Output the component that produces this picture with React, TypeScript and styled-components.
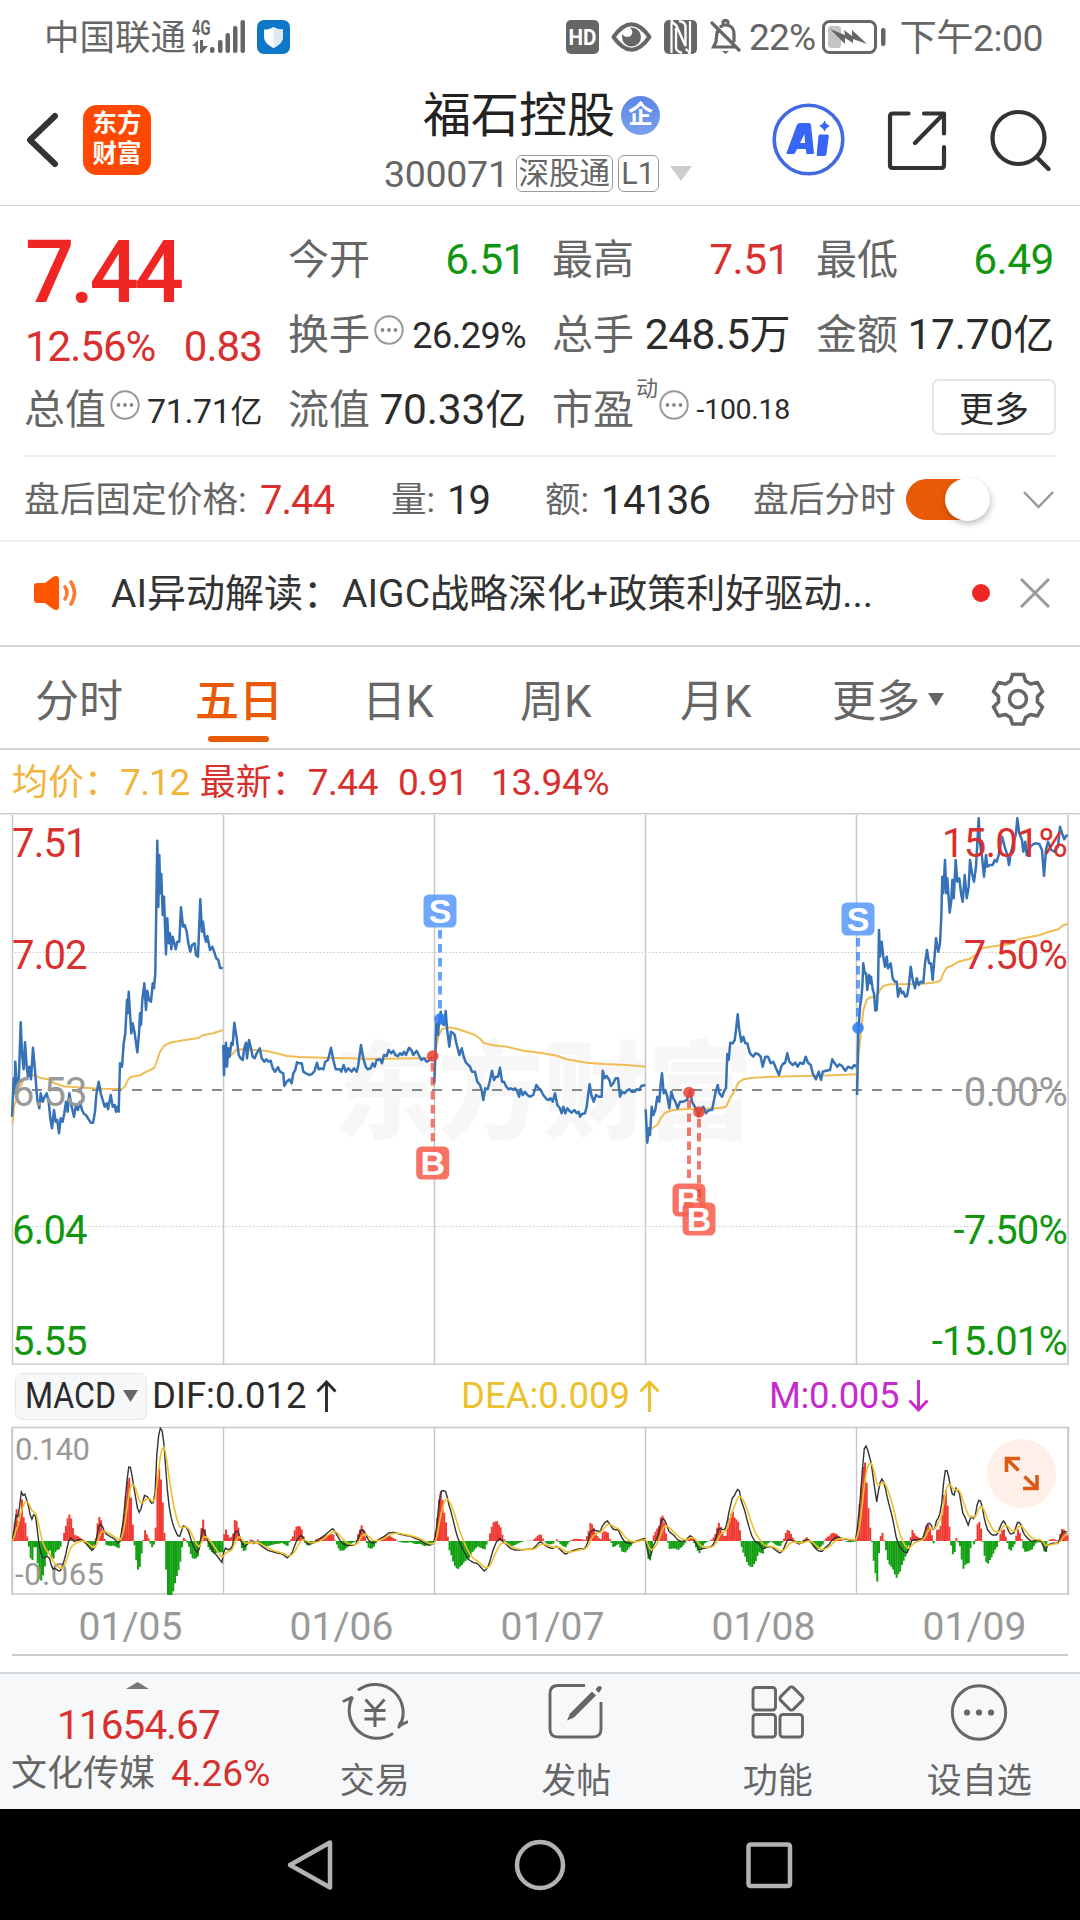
import React from 'react';
import styled, { createGlobalStyle } from 'styled-components';

const RED = '#d8302f';
const GREEN = '#12960f';
const GREY = '#666';
const INK = '#2b2b2b';
const ORANGE = '#e85a05';
const LINE = '#d4d4d4';

const Global = createGlobalStyle`
  * { box-sizing: border-box; }
  body { margin: 0; background: #fff; }
  svg { display: block; flex: none; }
`;

const Screen = styled.div`
  width: 1080px;
  height: 1920px;
  overflow: hidden;
  display: flex;
  flex-direction: column;
  background: #fff;
  font-family: Roboto, 'Noto Sans CJK SC', sans-serif;
  line-height: 1;
`;

const T = styled.span<{ s: number; c?: string; w?: number; ls?: number; ml?: number }>`
  font-size: ${p => p.s}px;
  line-height: 1.1;
  color: ${p => p.c || GREY};
  font-weight: ${p => p.w || 400};
  letter-spacing: ${p => p.ls || 0}px;
  margin-left: ${p => p.ml || 0}px;
  white-space: pre;
  flex: none;
`;

/* ---------- status bar ---------- */
const StatusBar = styled.div`
  height: 74px;
  display: flex;
  justify-content: space-between;
  align-items: center;
  padding: 0 37px 0 44px;
`;
const StatusSide = styled.div`
  display: flex;
  align-items: center;
`;
const StatusIcon = styled.svg<{ ml: number }>`
  margin-left: ${p => p.ml}px;
`;
const StatusText = styled(T)`
  padding-top: 3px;
`;

const Status = () => (
  <StatusBar>
    <StatusSide>
      <StatusText s={35.5}>中国联通</StatusText>
      <StatusIcon ml={6} width="54" height="36" viewBox="0 0 54 36" fill={GREY}>
        <text x="0" y="15.500" fontSize="20" fontWeight="700" textLength="18.500" lengthAdjust="spacingAndGlyphs">4G</text>
        <path d="M0 27l6-6v13H3.500V27zM8 21h3v6h5l-6 7H8z" />
        <rect x="18" y="28" width="4.500" height="6" rx="2" />
        <rect x="26" y="21" width="4.500" height="13" rx="2" />
        <rect x="33.500" y="14" width="4.500" height="20" rx="2" />
        <rect x="41" y="7" width="4.500" height="27" rx="2" />
        <rect x="48.500" y="1" width="4.500" height="33" rx="2" />
      </StatusIcon>
      <StatusIcon ml={11} width="33" height="34" viewBox="0 0 33 34">
        <rect width="33" height="34" rx="7" fill="#0d78c8" />
        <path d="M16.500 7c3 2 6 2.500 9.500 2.500v7c0 5-4 9-9.500 11.500C11 25.500 7 21.500 7 16.500v-7C10.500 9.500 13.500 9 16.500 7z" fill="#fff" />
        <path d="M16.500 7c3 2 6 2.500 9.500 2.500v7c0 5-4 9-9.500 11.500z" fill="#dceaf6" />
      </StatusIcon>
    </StatusSide>
    <StatusSide>
      <StatusIcon ml={0} width="33" height="34" viewBox="0 0 33 34">
        <rect width="33" height="34" rx="5" fill={GREY} />
        <text x="16.500" y="25" fontSize="22" fontWeight="700" fill="#fff" textAnchor="middle" textLength="28" lengthAdjust="spacingAndGlyphs">HD</text>
      </StatusIcon>
      <StatusIcon ml={12} width="41" height="30" viewBox="0 0 41 30">
        <path d="M2.500 15Q20.500-10.500 38.500 15Q20.500 40.500 2.500 15z" fill="none" stroke={GREY} strokeWidth="4" strokeLinejoin="round" />
        <path d="M20.500 5.500a9.500 9.500 0 1 1-9.500 9.500c0-1 .2-2 .5-3 1.500 3.500 7 4 9 1 1.800-3 .5-6-2-7.200z" fill={GREY} />
      </StatusIcon>
      <StatusIcon ml={12} width="33" height="34" viewBox="0 0 33 34">
        <rect width="33" height="34" rx="5" fill={GREY} />
        <path d="M7.500 0Q8 3 12 5L21.500 26V6Q21 2 15 1M12 8V28Q12 31 18 33M26 34Q25 31 21.500 29" fill="none" stroke="#fff" strokeWidth="2.400" />
        <path d="M7.500 2V33M26 1V32" stroke="#fff" strokeWidth="2.200" />
      </StatusIcon>
      <StatusIcon ml={13} width="31" height="36" viewBox="0 0 31 36" fill="none" stroke={GREY} strokeWidth="3.200" strokeLinecap="round">
        <path d="M8.500 10.500C6 14 6.500 20 6 23L3.500 28H25M24 22V15c0-5-3-9-8.500-9-2 0-3.500.5-4.500 1.500M13 4a2.500 2.500 0 0 1 5 0M2 4l27 27" />
        <path d="M12 32h7l-3.500 3z" fill={GREY} stroke="none" />
      </StatusIcon>
      <StatusText s={37} ls={-0.7} ml={8}>22%</StatusText>
      <StatusIcon ml={7} width="65" height="34" viewBox="0 0 65 34">
        <rect x="1.500" y="1.500" width="52" height="31" rx="6" fill="none" stroke={GREY} strokeWidth="3" />
        <rect x="6" y="6" width="13" height="22" rx="3" fill="#c4c4c4" />
        <path d="M8 9l15 6-1-5 8 6v-6l15 14-14-5 0 4-8-5v6z" fill={GREY} />
        <rect x="59" y="8" width="4.500" height="18" rx="2" fill={GREY} />
      </StatusIcon>
      <StatusText s={37.3} ls={-0.5} ml={12}>下午2:00</StatusText>
    </StatusSide>
  </StatusBar>
);

/* ---------- title bar ---------- */
const HeaderBar = styled.header`
  height: 132px;
  display: grid;
  grid-template-columns: 83px 302px 322px 1fr;
  align-items: center;
  border-bottom: 1.500px solid ${LINE};
`;
const Logo = styled.div`
  width: 68px;
  height: 70px;
  border-radius: 14px;
  background: #ff4800;
  color: #fff;
  font-size: 24.500px;
  font-weight: 700;
  line-height: 30px;
  text-align: center;
  padding-top: 4px;
`;
const TitleCol = styled.div`
  display: flex;
  flex-direction: column;
  align-self: start;
  padding-top: 17px;
`;
const NameRow = styled.div`
  display: flex;
  align-items: center;
  height: 50px;
  padding-left: 38px;
`;
const CodeRow = styled.div`
  display: flex;
  align-items: center;
  height: 36px;
  margin-top: 14px;
`;
const CodeText = styled(T)`
  padding-top: 3px;
`;
const Qi = styled.span`
  width: 39px;
  height: 39px;
  border-radius: 50%;
  background: linear-gradient(#5b86e6, #7ba0ec);
  color: #fff;
  font-size: 25px;
  font-weight: 700;
  line-height: 38px;
  text-align: center;
  margin: -2px 0 0 6px;
`;
const Tag = styled.span<{ w: number; ml: number }>`
  width: ${p => p.w}px;
  height: 37px;
  margin-left: ${p => p.ml}px;
  border: 1.500px solid #999;
  border-radius: 6px;
  color: ${GREY};
  font-size: 30.500px;
  line-height: 36px;
  text-align: center;
  white-space: nowrap;
`;
const Actions = styled.div`
  display: flex;
  align-items: center;
  padding-left: 65px;
`;
const ActionIcon = styled.svg<{ ml: number }>`
  margin-left: ${p => p.ml}px;
`;

const Header = () => (
  <HeaderBar>
    <svg width="60" height="60" viewBox="0 0 60 60" fill="none" stroke="#333" strokeWidth="6" strokeLinecap="round" strokeLinejoin="round">
      <path d="M55 6L30 30l25 24" />
    </svg>
    <Logo>东方<br />财富</Logo>
    <TitleCol>
      <NameRow>
        <T s={48} c="#222">福石控股</T>
        <Qi>企</Qi>
      </NameRow>
      <CodeRow>
        <CodeText s={37.5} ls={-0.3} ml={-1}>300071</CodeText>
        <Tag w={97} ml={7}>深股通</Tag>
        <Tag w={41} ml={5}>L1</Tag>
        <ActionIcon ml={11} width="22" height="15"><path d="M0 0h22L11 15z" fill="#ccc" /></ActionIcon>
      </CodeRow>
    </TitleCol>
    <Actions>
      <ActionIcon ml={0} width="73" height="73" viewBox="0 0 73 73">
        <circle cx="36.500" cy="36.500" r="34.300" fill="none" stroke="#4169e1" strokeWidth="3.600" />
        <path d="M14.500 50L25 21.500Q26 20 28 20h9q1.500 0 2 2L42 50q0 1-1 1H34.500L33.700 46H25L23 50q-.5 1-2 1H15q-1 0-.5-1zM28 40h5L32.500 31z" fill="#3865f5" fillRule="evenodd" />
        <path d="M48 31.500h7.500q1.500 0 1.300 1.500L54.500 51q-.3 2-2 2h-6.500q-1.500 0-1.300-1.500L46.500 33q0-1.500 1.500-1.500zM52.500 17.500q1.500 4 5.500 5.500-4 1.500-5.500 5.500-1.500-4-5.500-5.500 4-1.500 5.500-5.500z" fill="#3865f5" />
      </ActionIcon>
      <ActionIcon ml={42} width="60" height="60" viewBox="0 0 60 60" fill="none" stroke="#333" strokeWidth="4.200" strokeLinecap="round" strokeLinejoin="round">
        <path d="M21.500 3.500H6Q3 3.500 3 6.500v49Q3 58 6 58H54Q57 58 57 55V37M37 3.500H57V23.500M56 4.500L28 33" />
      </ActionIcon>
      <ActionIcon ml={43} width="62" height="62" viewBox="0 0 62 62" fill="none" stroke="#333" strokeWidth="4.200" strokeLinecap="round">
        <circle cx="28.500" cy="29" r="26" />
        <path d="M46.500 48L58.500 60" />
      </ActionIcon>
    </Actions>
  </HeaderBar>
);

/* ---------- quote ---------- */
const QuoteGrid = styled.section`
  display: grid;
  grid-template-columns: repeat(4, 238px);
  grid-template-rows: repeat(3, 75px);
  column-gap: 26px;
  padding: 17px 24px 0;
  height: 249px;
`;
const PriceBox = styled.div`
  grid-row: span 2;
  padding-left: 1px;
`;
const Price = styled.div`
  margin-top: -3px;
  font-size: 87px;
  line-height: 104px;
  font-weight: 500;
  letter-spacing: -4.500px;
  color: #f02624;
`;
const Change = styled.div`
  display: flex;
  justify-content: space-between;
`;
const Cell = styled.div`
  display: flex;
  align-items: center;
  white-space: nowrap;
`;
const Val = styled.span<{ s?: number; c?: string; ls?: number }>`
  margin-left: auto;
  font-size: ${p => p.s || 42.5}px;
  color: ${p => p.c || INK};
  letter-spacing: ${p => p.ls ?? -0.5}px;
`;
const Wan = styled.span<{ s: number }>`
  font-size: ${p => p.s}px;
`;
const Dyn = styled.span`
  font-size: 22px;
  color: ${GREY};
  align-self: flex-start;
  margin: 5px 0 0 2px;
`;
const MoreBtn = styled.button`
  margin: 0 -2px 8px auto;
  width: 124px;
  height: 56px;
  border: 2px solid #e3e5e5;
  border-radius: 7px;
  background: #fff;
  color: ${INK};
  font: 35px Roboto, 'Noto Sans CJK SC', sans-serif;
  padding: 0 0 6px;
`;
const DotsSvg = styled.svg<{ ml: number }>`
  margin: 0 0 12px ${p => p.ml}px;
`;
const Dots = ({ ml = 4 }: { ml?: number }) => (
  <DotsSvg ml={ml} width="30" height="32" viewBox="0 0 30 32">
    <circle cx="15" cy="16" r="13.700" fill="none" stroke="#999" strokeWidth="2" />
    <g fill="#888"><circle cx="8.500" cy="16" r="1.900" /><circle cx="15" cy="16" r="1.900" /><circle cx="21.500" cy="16" r="1.900" /></g>
  </DotsSvg>
);
const K = ({ children }: { children: React.ReactNode }) => <T s={41}>{children}</T>;

const Quote = () => (
  <QuoteGrid>
    <PriceBox>
      <Price>7.44</Price>
      <Change><T s={42} c={RED} ls={-1}>12.56%</T><T s={42} c={RED} ls={-0.9}>0.83</T></Change>
    </PriceBox>
    <Cell><K>今开</K><Val c={GREEN}>6.51</Val></Cell>
    <Cell><K>最高</K><Val c={RED}>7.51</Val></Cell>
    <Cell><K>最低</K><Val c={GREEN}>6.49</Val></Cell>
    <Cell><K>换手</K><Dots /><Val s={36}>26.29%</Val></Cell>
    <Cell><K>总手</K><Val ls={-0.4}>248.5<Wan s={41}>万</Wan></Val></Cell>
    <Cell><K>金额</K><Val ls={-0.2}>17.70<Wan s={41}>亿</Wan></Val></Cell>
    <Cell><K>总值</K><Dots /><Val s={34} ls={-0.4}>71.71<Wan s={32}>亿</Wan></Val></Cell>
    <Cell><K>流值</K><Val ls={-0.2}>70.33<Wan s={41}>亿</Wan></Val></Cell>
    <Cell><K>市盈</K><Dyn>动</Dyn><Dots ml={1} /><Val s={28.5} ls={-0.3}>-100.18</Val></Cell>
    <Cell><MoreBtn>更多</MoreBtn></Cell>
  </QuoteGrid>
);

const AfterRow = styled.section`
  margin: 0 24px;
  height: 85px;
  border-top: 2px solid #eee;
  display: grid;
  grid-template-columns: 237px 130px 57px 97px 57px 151px 153px 117px 34px;
  align-items: center;
  padding-top: 5px;
`;
const Toggle = styled.div`
  width: 82px;
  height: 41px;
  margin-top: -4px;
  border-radius: 21px;
  background: ${ORANGE};
  display: flex;
  justify-content: flex-end;
  align-items: center;
`;
const Knob = styled.div`
  width: 45px;
  height: 43px;
  flex: none;
  margin-right: -2px;
  border-radius: 50%;
  background: #fff;
  box-shadow: 1px 3px 6px rgba(0, 0, 0, 0.25);
`;
const Chevron = styled.svg`
  margin-top: -3px;
`;
const After = () => (
  <AfterRow>
    <T s={35.7}>盘后固定价格:</T>
    <T s={40} c={RED} ls={-1} ml={-1}>7.44</T>
    <T s={35.5}>量:</T>
    <T s={40} c={INK} ls={-1} ml={-1}>19</T>
    <T s={35.5}>额:</T>
    <T s={40} c={INK} ls={-0.6} ml={-1}>14136</T>
    <T s={35.7}>盘后分时</T>
    <Toggle><Knob /></Toggle>
    <Chevron width="32" height="20" viewBox="0 0 32 20" fill="none" stroke="#999" strokeWidth="2.500"><path d="M1 2l14.500 15L30 2" /></Chevron>
  </AfterRow>
);

const NewsRow = styled.section`
  height: 107px;
  border-top: 2px solid #eee;
  border-bottom: 2px solid ${LINE};
  display: grid;
  grid-template-columns: 78px 860px 48px 32px;
  align-items: center;
  padding: 0 0 1px 34px;
`;
const NewsText = styled(T)`
  padding-top: 3px;
`;
const News = () => (
  <NewsRow>
    <svg width="44" height="36" viewBox="0 0 44 36">
      <path d="M3 8h8L19 2q5-3 6 2v28q-1 5-6 2l-8-6H3q-3 0-3-3V11q0-3 3-3z" fill="#ff5500" />
      <path d="M31 12q4 6 0 12M37 7q7 11 0 22" fill="none" stroke="#ff7a30" strokeWidth="3.600" strokeLinecap="round" />
    </svg>
    <NewsText s={39} c="#333" ml={-1}>AI异动解读：AIGC战略深化+政策利好驱动...</NewsText>
    <svg width="18" height="18"><circle cx="9" cy="9" r="9" fill="#f02624" /></svg>
    <svg width="30" height="30" viewBox="0 0 30 30" stroke="#999" strokeWidth="3"><path d="M1 1l28 28M29 1L1 29" /></svg>
  </NewsRow>
);

/* ---------- tabs ---------- */
const TabBar = styled.nav`
  height: 103px;
  border-bottom: 2px solid ${LINE};
  display: grid;
  grid-template-columns: 160px 167px 158px 160px 152px 159px 1fr;
  padding-left: 35px;
`;
const Tab = styled.div<{ on?: boolean }>`
  display: flex;
  align-items: center;
  height: 101px;
  font-size: 44px;
  color: ${p => (p.on ? ORANGE : GREY)};
  font-weight: ${p => (p.on ? 500 : 400)};
  white-space: nowrap;
  padding-top: 8px;
  position: relative;
`;
const Underline = styled.i`
  position: absolute;
  left: 13px;
  bottom: 6px;
  width: 61px;
  height: 6px;
  border-radius: 3px;
  background: ${ORANGE};
`;
const TabArrow = styled.svg`
  margin: 0 0 4px 8px;
`;
const Gear = styled.svg`
  margin-bottom: 6px;
`;
const Tabs = () => (
  <TabBar>
    <Tab>分时</Tab>
    <Tab on>五日<Underline /></Tab>
    <Tab>日K</Tab>
    <Tab>周K</Tab>
    <Tab>月K</Tab>
    <Tab>更多<TabArrow width="16" height="13"><path d="M0 0h16L8 13z" fill={GREY} /></TabArrow></Tab>
    <Tab>
      <Gear width="54" height="54" viewBox="0 0 54 54" fill="none" stroke={GREY} strokeWidth="3.600" strokeLinejoin="round">
        <path d="M21.500 2.500h11l2 6.500 5 3 7-1.500 5 9-5 5v5.500l5 5-5 9-7-1.500-5 3-2 6.500h-11l-2-6.500-5-3-7 1.500-5-9 5-5v-5.500l-5-5 5-9 7 1.500 5-3z" />
        <circle cx="27" cy="27" r="8.500" />
      </Gear>
    </Tab>
  </TabBar>
);

const Legend = styled.div`
  height: 63px;
  display: flex;
  align-items: center;
  padding: 4px 0 0 12px;
`;

/* ---------- price chart ---------- */
type Seg = { ox: number; oy: number; d: string };
// Sample coordinates are stored at three units per pixel, relative to each segment's origin.
const path = ({ ox, oy, d }: Seg) =>
  'M' + d.trim().split(/\s+/).map(p => {
    const [x, y] = p.split(',').map(Number);
    return `${(ox + x / 3).toFixed(1)} ${(oy + y / 3).toFixed(1)}`;
  }).join('L');

const PRICE: Seg[] = [
  { ox: 0, oy: 800, d: `36,950 41,835 44,880 46,785 51,870 56,850 62,667 66,760 71,808 75,727 80,800 84,830 88,800 93,838 99,743 104,800 108,850 112,900 118,925 122,880 128,905 134,890 140,880 146,905 151,955 156,985 162,930 167,965 172,960 177,1000 182,955 188,965 193,940 198,905 203,935 208,880 214,915 222,950 228,915 234,930 240,905 246,930 252,942 258,945 264,955 272,968 279,968 285,935 289,885 296,845 302,880 308,900 314,920 320,910 324,928 332,885 338,920 344,915 348,935 352,920 356,935 360,790 366,800 371,730 376,700 381,600 383,640 386,575 390,640 394,700 398,670 404,700 412,757 417,700 420,640 423,675 427,600 433,550 438,630 442,572 447,600 453,605 458,550 462,565 466,520 472,122 475,320 478,165 481,280 484,222 488,345 492,290 498,463 502,355 506,430 510,400 514,448 518,410 523,430 527,448 532,425 538,425 543,322 549,380 554,375 560,395 565,430 571,455 576,435 584,430 588,465 594,470 601,298 606,395 609,365 614,410 618,425 622,408 630,450 637,440 644,460 649,475 655,480 660,503 668,505` },
  { ox: 0, oy: 800, d: `670,735 672,825 675,760 678,728 681,800 685,745 689,770 694,728 698,735 703,668 710,715 716,765 722,775 728,780 733,745 738,728 741,775 747,720 753,745 758,770 764,775 770,760 779,745 785,775 793,785 799,778 805,785 812,782 818,805 825,815 834,802 840,815 850,820 853,858 860,845 868,838 875,850 880,820 886,810 891,787 898,790 905,790 910,815 918,820 928,825 936,822 944,812 951,788 956,808 962,805 970,808 976,785 984,780 993,743 1000,780 1007,808 1020,808 1024,815 1031,795 1037,815 1045,805 1055,815 1062,805 1070,815 1075,795 1083,735 1090,775 1097,800 1103,808 1112,805 1118,790 1124,800 1130,780 1140,778 1146,790 1152,765 1160,768 1166,750 1174,760 1180,752 1186,765 1194,768 1200,760 1206,765 1212,755 1218,765 1227,743 1235,752 1240,765 1250,752 1256,765 1264,780 1272,775 1280,785 1290,780 1296,770` },
  { ox: 420, oy: 880, d: `43,610 46,530 49,430 54,465 58,420 62,395 67,430 72,435 77,393 81,445 88,500 93,455 100,460 104,465 108,485 118,525 125,505 131,530 138,548 150,560 156,575 165,575 172,605 180,615 186,635 190,660 196,625 203,628 208,610 216,572 222,600 228,590 234,590 240,563 246,605 252,605 259,620 266,628 272,625 278,628 286,625 292,635 297,650 302,628 308,645 315,635 322,645 330,650 340,645 349,615 356,625 362,630 370,645 380,658 386,660 392,655 398,665 405,640 412,675 420,685 425,700 430,680 436,700 442,685 448,692 455,698 463,690 470,700 476,695 480,710 486,702 495,700 500,680 505,640 509,613 514,645 521,665 528,645 536,650 545,650 548,572 554,595 560,588 568,600 573,618 580,610 587,595 594,595 600,650 606,635 614,640 620,632 628,628 636,635 644,635 650,628 658,630 664,618 676,615` },
  { ox: 420, oy: 880, d: `677,688 682,788 686,745 690,765 695,680 700,705 706,690 712,650 718,665 722,610 726,580 731,640 736,630 742,650 748,685 754,635 760,655 766,665 773,685 780,665 790,665 800,660 806,645 811,630 816,665 824,680 830,690 836,708 842,690 850,680 858,700 864,692 870,690 876,690 881,665 887,635 893,615 898,640 906,650 914,630 918,625 922,522 926,540 931,488 938,490 944,480 948,450 953,403 958,450 964,485 970,470 976,490 982,490 990,520 1000,530 1006,520 1014,522 1022,530 1028,560 1036,530 1044,530 1052,550 1060,545 1068,565 1077,585 1084,560 1090,550 1095,550 1102,520 1108,545 1118,555 1126,548 1133,560 1140,548 1150,552 1157,530 1164,548 1172,555 1178,580 1188,598 1196,575 1203,600 1208,575 1218,572 1230,570 1237,538 1244,550 1252,560 1258,553 1266,558 1276,572 1284,560 1296,565 1303,555 1309,560` },
  { ox: 640, oy: 800, d: `651,885 655,700 660,620 664,595 667,560 670,490 674,520 678,520 682,570 687,525 691,550 693,530 698,568 702,580 706,632 710,630 714,560 717,390 720,470 725,425 730,470 735,500 740,470 744,505 752,490 758,535 764,545 770,545 774,590 780,565 786,580 790,575 796,590 801,588 806,560 812,500 818,540 825,565 830,535 836,555 842,545 850,548 855,490 861,450 867,490 873,490 878,540 883,480 888,415 895,455 900,430 904,350 907,230 910,280 915,180 919,280 922,235 929,338 934,300 937,240 941,295 947,180 952,245 958,235 964,285 968,305 974,225 980,295 986,260 990,180 996,220 1002,245 1008,200 1016,55 1020,130 1026,170 1032,230 1038,165 1042,200 1050,195 1058,195 1064,180 1070,185 1076,165 1086,110 1094,140 1102,165 1107,195 1112,160 1122,125 1128,100 1132,55 1138,100 1146,120 1150,155 1156,125 1160,165 1168,145 1176,135 1185,130 1198,132 1206,150 1212,228 1218,150 1224,125 1234,150 1244,155 1254,140 1260,80 1266,100 1273,118 1278,108 1283,105` },
];
const AVG: Seg[] = [
  { ox: 0, oy: 800, d: `38,970 42,920 55,880 70,840 85,828 105,825 120,834 145,838 160,848 190,859 250,863 300,866 365,867 375,860 383,840 392,831 420,826 435,817 463,804 470,785 480,755 492,738 510,728 550,721 595,714 608,706 640,700 668,690` },
  { ox: 0, oy: 800, d: `672,770 685,768 698,762 708,750 720,748 770,750 800,753 840,762 860,768 900,771 990,774 1050,775 1110,777 1250,775 1300,774` },
  { ox: 420, oy: 880, d: `45,520 55,470 65,448 85,442 110,446 140,456 165,465 180,476 192,489 215,495 260,500 310,512 370,520 410,527 440,538 500,548 550,552 620,555 676,560` },
  { ox: 420, oy: 880, d: `678,745 695,745 712,735 722,715 735,698 760,690 800,687 860,686 900,684 918,680 930,655 945,630 955,608 970,598 1000,593 1060,590 1150,588 1240,586 1309,583` },
  { ox: 640, oy: 800, d: `651,880 656,760 664,690 670,630 680,600 690,592 710,590 720,570 730,558 750,553 840,552 880,548 902,542 910,520 920,503 940,495 955,485 990,476 1010,464 1025,446 1040,442 1110,432 1135,418 1200,405 1225,396 1255,388 1270,376 1283,372` },
];
const DAYS = [12.5, 223.5, 434.5, 645.5, 856.5, 1068];

const AXIS: [string, string, number, string][] = [
  ['7.51', '15.01%', 857, RED],
  ['7.02', '7.50%', 969, RED],
  ['6.53', '0.00%', 1106, '#999'],
  ['6.04', '-7.50%', 1243.5, GREEN],
  ['5.55', '-15.01%', 1354.5, GREEN],
];

const Marker = ({ x, dot, box, kind }: { x: number; dot: number; box: number; kind: 'S' | 'B' }) => {
  const sell = kind === 'S';
  const c = sell ? '#2b7df5' : '#f0402f';
  return (
    <g>
      <path d={`M${x} ${sell ? box + 19 : dot + 7}V${sell ? dot - 4 : box - 17}`} stroke={c} opacity="0.7" strokeWidth="4" strokeDasharray="8.500 5.500" />
      <circle cx={x} cy={dot} r="5.800" fill={c} opacity="0.85" />
      <rect x={x - 16.5} y={box - 16.5} width="33" height="33" rx="5.500" fill={sell ? '#5a9bfa' : '#f7604f'} opacity="0.88" />
      <text x={x} y={box + 12} fontSize="34" fontWeight="700" fill="#fff" textAnchor="middle" fontFamily="Liberation Sans, sans-serif">{kind}</text>
    </g>
  );
};

const PriceChart = () => (
  <svg width="1080" height="553" viewBox="0 813 1080 553">
    <text x="333" y="1130" fontSize="106" fontWeight="900" fill="#f7f7f7" textLength="420" fontFamily="Noto Sans CJK SC, sans-serif">东方财富</text>
    <g stroke="#c8c8c8" strokeWidth="1.500" fill="none">
      <path d="M0 813.800H1080M12 1364.300H1068.500" stroke="#ccc" />
      {DAYS.map(x => <path key={x} d={`M${x} 815V1364`} />)}
      <path d="M15 952.500H1068M15 1226.500H1068" strokeDasharray="1.500 2" strokeWidth="1" />
    </g>
    <path d="M12 1090H1068" stroke="#888" strokeWidth="2" strokeDasharray="10 10" />
    <g fill="none" stroke="#f0bc55" strokeWidth="2" strokeLinejoin="round">
      {AVG.map((s, i) => <path key={i} d={path(s)} />)}
    </g>
    <g fill="none" stroke="#3672b5" strokeWidth="2.500" strokeLinejoin="round">
      {PRICE.map((s, i) => <path key={i} d={path(s)} />)}
    </g>
    <g fontSize="40" letterSpacing="-0.800">
      {AXIS.map(([l, r, y, c]) => (
        <g key={l} fill={c}>
          <text x="12" y={y}>{l}</text>
          <text x="1067" y={y} textAnchor="end">{r}</text>
        </g>
      ))}
    </g>
    <Marker x={440} dot={1019} box={911} kind="S" />
    <Marker x={432.7} dot={1056} box={1163} kind="B" />
    <Marker x={689} dot={1092.5} box={1200} kind="B" />
    <Marker x={699} dot={1112} box={1219} kind="B" />
    <Marker x={858} dot={1028} box={919} kind="S" />
  </svg>
);

/* ---------- MACD ---------- */
const MacdHead = styled.div`
  height: 60px;
  display: grid;
  grid-template-columns: 137px 309px 308px 1fr;
  align-items: center;
  padding-left: 15px;
`;
const MacdBtn = styled.div`
  width: 132px;
  height: 47px;
  border: 1.500px solid #e4e6ea;
  border-radius: 7px;
  background: #f6f7f9;
  display: flex;
  align-items: center;
  justify-content: space-between;
  padding: 0 8px 0 9px;
`;
const MacdName = styled.span`
  font-size: 36.500px;
  color: ${INK};
  display: inline-block;
  transform: scaleX(0.88);
  transform-origin: left;
  width: 90px;
`;
const Reading = styled.div`
  display: flex;
  align-items: center;
  padding-top: 1px;
`;
const MacdArrow = styled.svg`
  margin-left: 9px;
`;
const Arrow = ({ c, down }: { c: string; down?: boolean }) => (
  <MacdArrow width="21" height="32" viewBox="0 0 21 32" fill="none" stroke={c} strokeWidth="2.900">
    <path d={down ? 'M10.500 0v30M1.500 20.500l9 9.500 9-9.500' : 'M10.500 32V2M1.500 11.500l9-9.500 9 9.500'} />
  </MacdArrow>
);

const ZERO = 1541;
const SX = 1 / 2.904;
const DIF_A = `36,540 42,500 46,465 52,470 57,440 60,397 64,395 68,410 72,402 77,418 82,435 91,482 98,463 105,470 110,530 116,570 122,590 128,595 136,588 144,595 152,628 160,625 170,633 177,632 184,610 192,580 198,545 206,532 214,545 225,540 240,540 255,557 268,573 276,560 284,510 290,490 298,500 306,520 320,530 330,535 346,552 356,500 362,440 368,370 374,318 378,318 384,350 392,400 398,440 403,460 410,445 420,405 430,412 440,430 447,428 452,380 455,290 460,230 466,203 472,215 478,270 484,370 490,430 498,480 508,510 518,530 524,528 530,497 540,500 548,515 556,545 566,568 576,582 582,540 588,508 594,515 602,540 610,555 620,575 632,590 645,608 652,562 660,568 668,570 676,555 680,525 688,508 695,525 702,550 710,562 720,550 730,545 738,552 746,545 752,552 762,560 776,570 790,575 808,580 820,582 834,594 848,580 858,550 868,530 876,525 886,545 896,553 908,550 916,545 926,540 940,528 955,515 966,505 976,520 986,540 998,553 1010,557 1032,555 1042,530 1050,505 1058,515 1070,540 1082,550 1098,540 1115,530 1130,518 1145,517 1160,522 1180,527 1192,528 1205,535 1220,540 1232,550 1248,556 1258,552 1262,540 1268,500 1275,430 1280,392 1290,392 1296,395 1302,430 1310,455 1318,490 1328,530 1340,560 1350,580 1360,598 1375,608 1385,610 1395,620 1407,634 1418,620 1425,595 1432,570 1442,545 1452,535 1460,545 1472,555 1482,565 1495,570 1510,570 1530,568 1545,568 1555,560 1565,548`;
const DIF_B = `2,545 20,560 36,566 48,558 60,570 74,583 86,576 100,570 118,566 130,566 138,550 146,515 155,510 175,515 182,495 195,482 205,495 212,508 228,510 236,530 248,548 262,550 276,545 290,540 303,535 306,535 312,575 320,597 328,560 335,545 345,520 350,490 356,472 362,480 375,515 388,525 400,540 412,545 424,540 438,525 448,540 462,570 475,565 490,562 500,558 510,540 516,510 524,505 532,510 540,505 548,460 558,415 566,405 572,388 578,388 584,420 594,450 604,490 614,525 624,545 636,550 646,568 656,562 672,560 684,570 698,580 706,570 716,545 724,537 738,545 752,552 766,545 775,538 786,545 796,560 806,572 818,575 826,565 838,555 848,540 862,530 876,535 900,540 918,540 922,500 930,420 936,330 942,265 947,258 953,275 962,310 970,370 978,428 986,370 993,357 1000,370 1010,420 1022,465 1034,530 1044,560 1056,575 1066,580 1074,560 1080,540 1090,540 1112,537 1120,505 1128,487 1136,495 1144,515 1152,480 1160,470 1168,420 1175,332 1184,332 1190,370 1196,400 1202,408 1208,383 1218,400 1228,460 1236,475 1243,497 1252,468 1262,480 1270,430 1277,415 1284,440 1292,485 1300,510 1312,525 1328,525 1338,495 1346,482 1354,495 1364,522 1376,520 1388,483 1396,492 1404,520 1416,535 1428,545 1440,540 1456,542 1462,560 1467,575 1474,555 1488,550 1506,550 1512,525 1520,515 1530,515`;

const parse = (s: string, ox: number) =>
  s.split(' ').map(p => {
    const [x, y] = p.split(',').map(Number);
    return [ox + x * SX, 1360 + y / 3] as [number, number];
  });
const DIF = [...parse(DIF_A, 0), ...parse(DIF_B, 540)];
const STEP = 1.76;
const bars: { x: number; dif: number; dea: number }[] = [];
let dea = ZERO;
let seg = 0;
for (let x = 12.5; x < 1067; x += STEP) {
  while (seg < DIF.length - 2 && DIF[seg + 1][0] < x) seg++;
  const [x0, y0] = DIF[seg];
  const [x1, y1] = DIF[seg + 1];
  const t = Math.min(1, Math.max(0, (x - x0) / (x1 - x0)));
  const dif = y0 + (y1 - y0) * t;
  dea += (dif - dea) * 0.31;
  bars.push({ x, dif, dea });
}
const poly = (k: 'dif' | 'dea') => bars.map(b => `${b.x.toFixed(1)},${b[k].toFixed(1)}`).join(' ');

const MacdChart = () => (
  <svg width="1080" height="169" viewBox="0 1426 1080 169">
    <g stroke="#c8c8c8" strokeWidth="1.500" fill="none">
      <path d="M12 1427.500H1068.500V1594H12z" />
      {DAYS.map(x => <path key={x} d={`M${x} 1427V1594`} />)}
    </g>
    {bars.map(b => {
      const h = (b.dif - b.dea) * 2.15;
      return <rect key={b.x} x={b.x - 0.4} width="2" y={h < 0 ? ZERO + h : ZERO} height={Math.abs(h)} fill={h < 0 ? '#f03a33' : '#12a012'} />;
    })}
    <g fill="#999" fontSize="31">
      <text x="15" y="1460" textLength="75">0.140</text>
      <text x="15" y="1585" textLength="89">-0.065</text>
    </g>
    <polyline points={poly('dif')} fill="none" stroke="#333" strokeWidth="1.400" />
    <polyline points={poly('dea')} fill="none" stroke="#ecc12c" strokeWidth="1.600" />
    <circle cx="1021.500" cy="1473.500" r="34.500" fill="#fef0e8" />
    <path d="M1006.500 1472V1458.500H1020M1007.500 1459.500L1018.500 1470.500M1037 1475V1488.500H1023M1036 1487.500L1024.500 1476.500" fill="none" stroke="#dc5a14" strokeWidth="3.600" />
  </svg>
);

const Dates = styled.div`
  margin: 0 12px;
  height: 61px;
  border-bottom: 2px solid #ccc;
  padding-left: 13px;
  display: grid;
  grid-template-columns: repeat(5, 211px);
  align-items: center;
  justify-items: center;
  font-size: 39px;
  color: #999;
  padding-top: 5px;
`;

/* ---------- bottom ---------- */
const BottomBar = styled.footer`
  margin-top: 16px;
  height: 137px;
  border-top: 2px solid #d6d9db;
  background: #f7f8fa;
  display: grid;
  grid-template-columns: 274px repeat(4, 201.500px);
`;
const IndexBox = styled.div`
  display: flex;
  flex-direction: column;
  padding: 8px 0 0 11px;
`;
const IndexArrow = styled.svg`
  margin-left: 115px;
`;
const IndexValue = styled.div`
  margin: 14px 0 0 46px;
  font-size: 40.500px;
  line-height: 44px;
  letter-spacing: -0.900px;
  color: ${RED};
`;
const IndexRow = styled.div`
  display: flex;
  align-items: center;
  margin-top: 7px;
`;
const Item = styled.div`
  display: flex;
  flex-direction: column;
  align-items: center;
  padding-top: 7px;
  color: ${GREY};
  font-size: 35px;
`;
const ItemLabel = styled.span`
  margin-top: 19px;
`;
const iconProps = { width: 66, height: 64, viewBox: '0 0 66 64', fill: 'none', stroke: GREY, strokeWidth: 2.9, strokeLinecap: 'round' as const, strokeLinejoin: 'round' as const };

const Bottom = () => (
  <BottomBar>
    <IndexBox>
      <IndexArrow width="23" height="7"><path d="M0 7L11.500 0 23 7z" fill="#777" /></IndexArrow>
      <IndexValue>11654.67</IndexValue>
      <IndexRow><T s={36}>文化传媒</T><T s={37} c={RED} ml={16}>4.26%</T></IndexRow>
    </IndexBox>
    <Item>
      <svg {...iconProps}>
        <path d="M17 8.500A28 28 0 0 1 57 46M58 44.500L65 41M57 46l1.200-4M50 53A28 28 0 0 1 10 17M2 20l7.500-3.500L8 21" strokeWidth="3" />
        <path d="M23.500 18.500L33 29l9.500-10.500M22.500 29.500h21M22.500 38h21M33 29.500V46" strokeLinecap="butt" strokeWidth="3" />
      </svg>
      <ItemLabel>交易</ItemLabel>
    </Item>
    <Item>
      <svg {...iconProps}>
        <path d="M42 4.500H15Q7 4.500 7 12.500V48q0 8 8 8H50q8 0 8-8V21" strokeLinecap="butt" />
        <path d="M24 39.500l3-7L49 10.500l4 4L31 36.500zM52.500 8.500l2.500-3q3-1.500 4 1.500l-3 5z" fill={GREY} stroke="none" />
      </svg>
      <ItemLabel>发帖</ItemLabel>
    </Item>
    <Item>
      <svg {...iconProps}>
        <rect x="8" y="6.500" width="22.500" height="22.500" rx="3" />
        <rect x="8" y="33.500" width="22.500" height="22.500" rx="3" />
        <rect x="35" y="33.500" width="22.500" height="22.500" rx="3" />
        <rect x="37.500" y="8.500" width="18" height="18" rx="3" transform="rotate(45 46.500 17.500)" />
      </svg>
      <ItemLabel>功能</ItemLabel>
    </Item>
    <Item>
      <svg {...iconProps}>
        <circle cx="33" cy="31.500" r="26.700" />
        <g fill={GREY} stroke="none"><circle cx="21" cy="31.500" r="3.100" /><circle cx="33" cy="31.500" r="3.100" /><circle cx="45" cy="31.500" r="3.100" /></g>
      </svg>
      <ItemLabel>设自选</ItemLabel>
    </Item>
  </BottomBar>
);

const NavBar = styled.div`
  flex: 1;
  background: #000;
  display: flex;
  justify-content: center;
  align-items: center;
  gap: 178px;
`;
const Nav = () => (
  <NavBar>
    <svg width="52" height="54" viewBox="0 0 52 54" fill="none" stroke="#b3b3b3" strokeWidth="4.500" strokeLinejoin="round"><path d="M46 4.500V49.500L6 27z" /></svg>
    <svg width="52" height="54" viewBox="0 0 52 54" fill="none" stroke="#b3b3b3" strokeWidth="4.500"><circle cx="26" cy="27" r="23" /></svg>
    <svg width="52" height="54" viewBox="0 0 52 54" fill="none" stroke="#b3b3b3" strokeWidth="4.500"><rect x="4.500" y="6.500" width="41.500" height="41.500" rx="2" /></svg>
  </NavBar>
);

export default function App() {
  return (
    <Screen>
      <Global />
      <Status />
      <Header />
      <Quote />
      <After />
      <News />
      <Tabs />
      <Legend>
        <T s={36} c="#f0b53c">均价：</T>
        <T s={37} c="#f0b53c" ls={-0.6}>7.12</T>
        <T s={36} c={RED} ml={10}>最新：</T>
        <T s={37} c={RED} ls={-0.5}>7.44</T>
        <T s={37} c={RED} ls={-0.5} ml={20}>0.91</T>
        <T s={37} c={RED} ls={-0.3} ml={23}>13.94%</T>
      </Legend>
      <PriceChart />
      <MacdHead>
        <MacdBtn>
          <MacdName>MACD</MacdName>
          <svg width="15" height="12"><path d="M0 0h15L7.500 12z" fill={GREY} /></svg>
        </MacdBtn>
        <Reading><T s={36.5} c={INK}>DIF:0.012</T><Arrow c={INK} /></Reading>
        <Reading><T s={36.5} c="#ecc12c">DEA:0.009</T><Arrow c="#ecc12c" /></Reading>
        <Reading><T s={36.5} c="#c62bcf" ls={-0.3}>M:0.005</T><Arrow c="#c62bcf" down /></Reading>
      </MacdHead>
      <MacdChart />
      <Dates>
        {['01/05', '01/06', '01/07', '01/08', '01/09'].map(d => <span key={d}>{d}</span>)}
      </Dates>
      <Bottom />
      <Nav />
    </Screen>
  );
}
